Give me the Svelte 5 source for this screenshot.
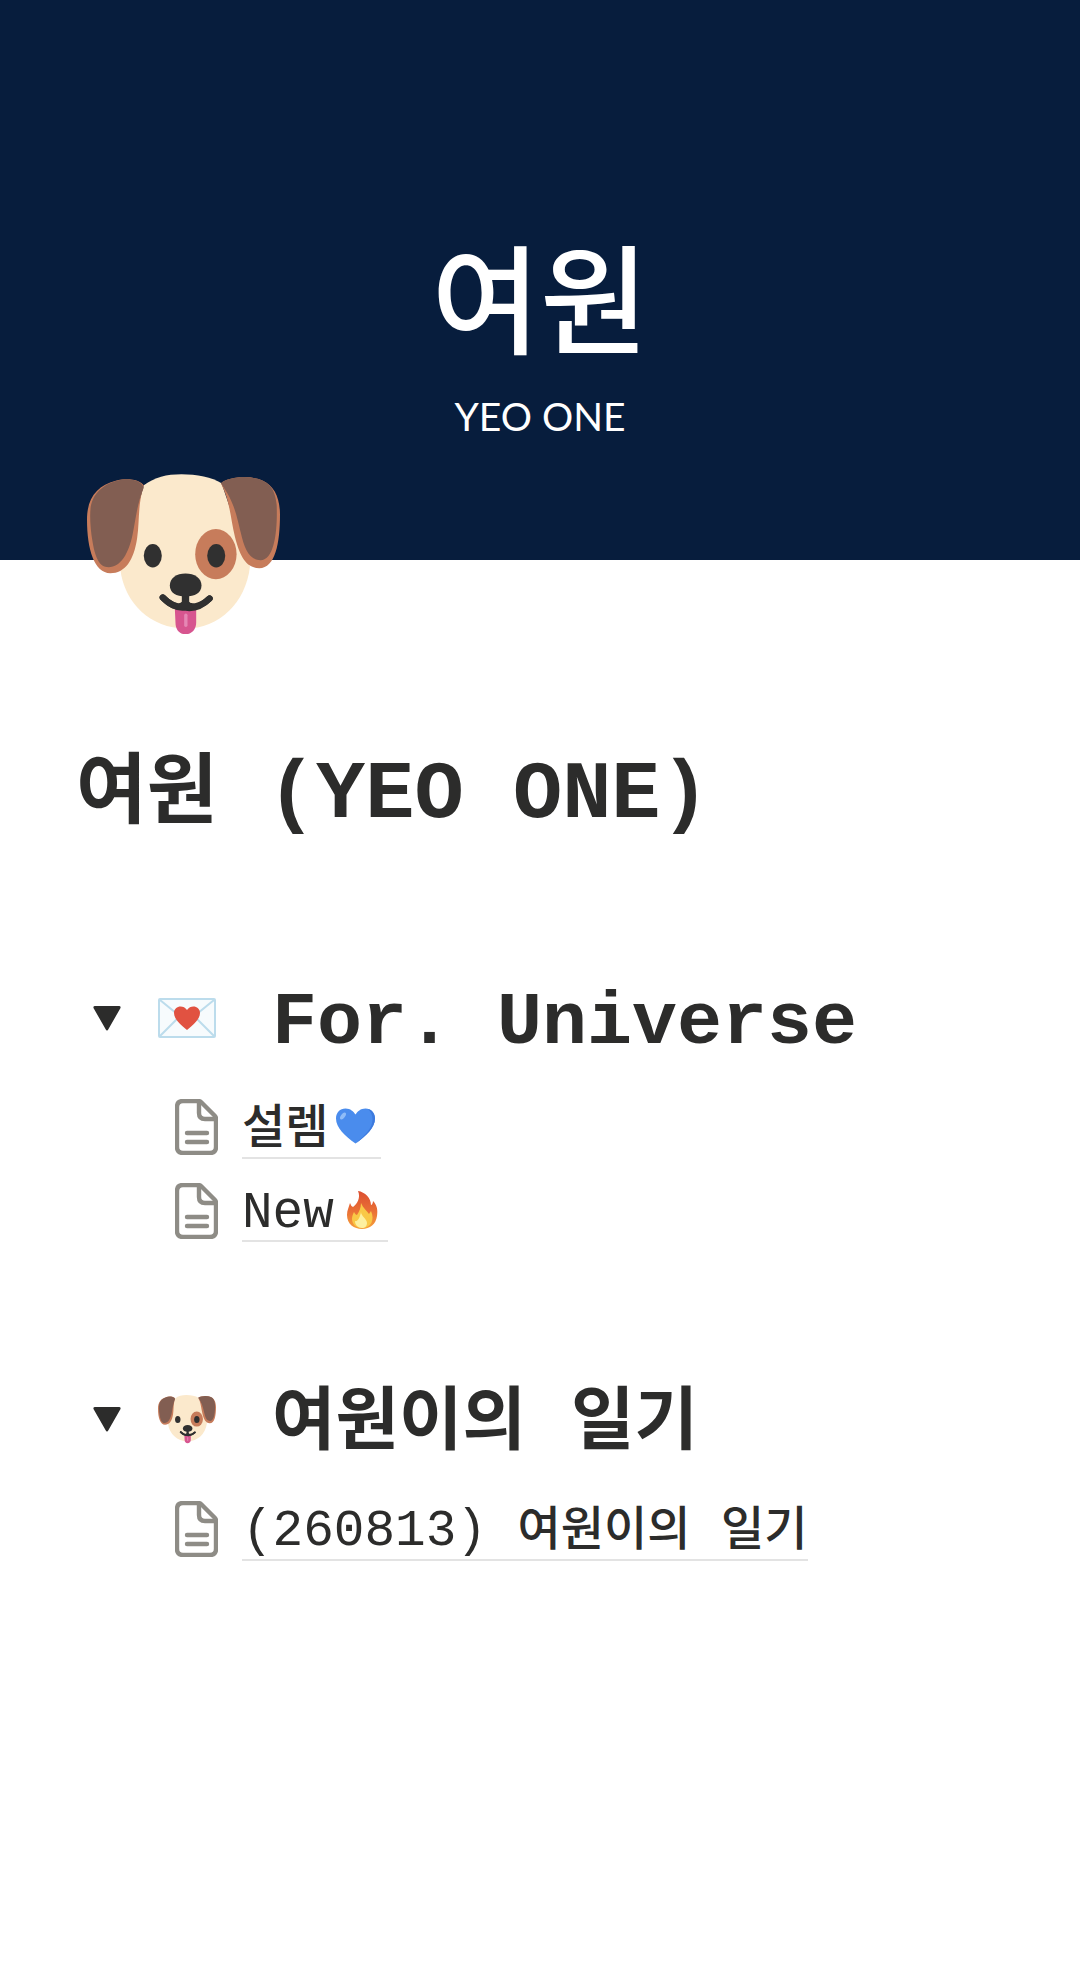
<script lang="ts">
  let sections = $state([
    {
      icon: "letter",
      title: [{ text: "For. Universe", ko: false }],
      open: true,
      pages: [
        { parts: [{ text: "설렘", ko: true }], emoji: "heart" },
        { parts: [{ text: "New", ko: false }], emoji: "fire" },
      ],
    },
    {
      icon: "dog",
      title: [
        { text: "여원이의", ko: true },
        { text: " ", ko: false },
        { text: "일기", ko: true },
      ],
      open: true,
      pages: [
        {
          parts: [
            { text: "(260813) ", ko: false },
            { text: "여원이의", ko: true },
            { text: " ", ko: false },
            { text: "일기", ko: true },
          ],
          emoji: "",
        },
      ],
    },
  ]);
</script>

{#snippet dog()}
  <svg class="dog" viewBox="52 43 578 480" aria-hidden="true">
    <path
      d="M222 77C255 53 290 44 335 44s92 9 120 27l85 249c-12 108-92 186-194 186S164 430 152 330Z"
      fill="#fbe9cc"
    />
    <path
      d="M222 77c-12-18-50-23-84-14C83 78 52 112 52 180c0 88 22 160 70 160 44 0 70-38 80-104 8-52 1-96 20-159Z"
      fill="#c77c5b"
    />
    <path
      d="M222 84c-8-24-46-31-84-20-40 12-66 38-74 72-5 26-2 72 4 106 8 50 20 80 49 80 36 0 60-40 72-100 9-46 15-98 33-138Z"
      fill="#825e52"
    />
    <path
      d="M453 71c24-20 86-26 126-8 33 15 51 50 51 102 0 84-14 160-62 160-42 0-60-42-73-94-13-53-14-106-42-160Z"
      fill="#c77c5b"
    />
    <path
      d="M453 71c24-20 86-26 126-8 26 12 37 34 41 72 3 70-5 166-48 166-34 0-48-32-60-84-16-68-23-94-59-146Z"
      fill="#825e52"
    />
    <ellipse cx="438" cy="283" rx="62" ry="75" fill="#c77c5b" />
    <ellipse cx="249" cy="288" rx="27" ry="35" fill="#303030" />
    <ellipse cx="439" cy="288" rx="27" ry="35" fill="#303030" />
    <path d="M315 446h64v42c0 22-14 35-32 35s-30-13-30-35Z" fill="#d7558f" />
    <path d="M348 466v30" stroke="#e587b4" stroke-width="10" stroke-linecap="round" />
    <path
      d="M279 413c28 30 60 34 68 14 10 22 46 14 72-11"
      fill="none"
      stroke="#303030"
      stroke-width="19"
      stroke-linecap="round"
    />
    <path
      d="M279 413c22 22 44 32 64 30M419 416c-20 20-42 30-66 28"
      fill="none"
      stroke="#303030"
      stroke-width="19"
      stroke-linecap="round"
    />
    <path d="M336 400h22v26l14 20c-10 6-18 4-25-2-8 8-18 8-28 2l17-20Z" fill="#303030" />
    <path
      d="M300 377c0-22 20-36 47-36s48 14 48 36-20 33-48 33-47-11-47-33Z"
      fill="#303030"
    />
  </svg>
{/snippet}

{#snippet emoji(name: string)}
  {#if name === "dog"}
    {@render dog()}
  {:else if name === "letter"}
    <svg class="letter" viewBox="0 0 58 40" aria-hidden="true">
      <rect x="1" y="1" width="56" height="38" rx="1" fill="#f7fbfd" stroke="#bcdcec" stroke-width="2" />
      <path d="M2 2l27 22L56 2M2 38l19-19M56 38L37 19" fill="none" stroke="#bcdcec" stroke-width="2" />
      <path
        d="M29 32C22 26 16 21 16 15c0-7 9-9 13-3 4-6 13-4 13 3 0 6-6 11-13 17Z"
        fill="#e15241"
      />
    </svg>
  {:else if name === "heart"}
    <svg class="heart" viewBox="0 0 39 36" aria-hidden="true">
      <path
        d="M19.500 35.500C9 28 0 20 0 10.500 0 4.500 4 .5 9.500.5c5 0 8 3 10 6 2-3 5-6 10-6 5.500 0 9.500 4 9.500 10 0 9.500-9 17.500-19.500 25Z"
        fill="#4a8ced"
      />
      <path
        d="M32 1c4 1 7 5 7 9.500 0 9.500-9 17.500-19.500 25 9-8 17-15 17-24 0-5-2-8-4.500-10.500Z"
        fill="#3d7add"
      />
      <ellipse cx="7" cy="8" rx="2" ry="4" fill="#8fbcf7" transform="rotate(38 7 8)" />
    </svg>
  {:else if name === "fire"}
    <svg class="fire" viewBox="0 0 32 38" aria-hidden="true">
      <defs>
        <linearGradient id="flame" x1="0" y1="0" x2="0" y2="1">
          <stop offset="0" stop-color="#dc4f31" />
          <stop offset=".55" stop-color="#ea7136" />
          <stop offset="1" stop-color="#f6a13a" />
        </linearGradient>
      </defs>
      <path
        d="M12 0c7 1 13 7 13 14 1 0 2-2 2-4 4 4 5 9 4 15-1 8-7 13-15 13S1 33 1 24c0-5 2-8 3-12 1 2 1 3 3 4C11 13 15 7 12 0Z"
        fill="url(#flame)"
      />
      <path
        d="M15 12c2 5 6 8 8 11l2-3c4 9 0 17-9 17-6 0-10-4-10-9 0-3 1-5 2-7 1 2 2 3 3 3 2-3 4-7 4-12Z"
        fill="#f9c846"
      />
      <path d="M15 21c0 4 6 7 6 11 0 3-2 5-5 5-4 0-7-3-7-7 3 1 5-4 6-9Z" fill="#fdf0a0" />
    </svg>
  {/if}
{/snippet}

<header class="cover">
  <div class="signature">
    <p class="signature-ko" lang="ko">여원</p>
    <p class="signature-en">YEO ONE</p>
  </div>
</header>

<main>
  <div class="page-icon">{@render dog()}</div>
  <h1><span class="ko" lang="ko">여원</span> (YEO ONE)</h1>

  {#each sections as section}
    <section>
      <div class="heading">
        <button
          class="toggle"
          class:closed={!section.open}
          aria-label="Toggle section"
          aria-expanded={section.open}
          onclick={() => (section.open = !section.open)}
        >
          <svg viewBox="0 0 28 25" aria-hidden="true">
            <path d="M2 0h24q2 0 1.500 2L15.500 23q-1.500 3-3 0L.5 2Q0 0 2 0Z" fill="#2c2c2b" />
          </svg>
        </button>
        <span class="section-icon">{@render emoji(section.icon)}</span>
        <h2>{#each section.title as part}<span class:ko={part.ko}>{part.text}</span>{/each}</h2>
      </div>

      {#if section.open}
        <ul>
          {#each section.pages as page}
            <li>
              <svg class="doc" viewBox="0 0 43 56" aria-hidden="true">
                <path
                  d="M8 2h15q2 0 3 1l14 14q1 1 1 3v28q0 6-6 6H8q-6 0-6-6V8q0-6 6-6Z"
                />
                <path d="M24 3v11q0 6 6 6h11M12 34h20M12 43h20" />
              </svg>
              <a href="#page">
                <span class="label">{#each page.parts as part}<span class:ko={part.ko}>{part.text}</span>{/each}</span>
                {@render emoji(page.emoji)}
              </a>
            </li>
          {/each}
        </ul>
      {/if}
    </section>
  {/each}
</main>

<style>
  :global(body) {
    margin: 0;
    background-color: #fff;
    color: #2c2c2b;
    font-family: "Liberation Mono", "Noto Sans CJK KR", monospace;
  }

  svg {
    display: block;
    flex: none;
  }

  .cover {
    box-sizing: border-box;
    display: flex;
    justify-content: center;
    height: 560px;
    padding-top: 210px;
    background-color: #071d3d;
    color: #fff;
  }

  .signature {
    text-align: center;
  }

  .signature p {
    margin: 0;
  }

  .signature-ko {
    font-family: "Noto Sans CJK KR", sans-serif;
    font-size: 118px;
    font-weight: 500;
    line-height: 168px;
  }

  .signature-en {
    font-family: Lato, sans-serif;
    font-size: 39px;
    line-height: 76px;
  }

  main {
    padding: 0 76px 80px;
  }

  .page-icon {
    position: relative;
    width: 193px;
    height: 160px;
    margin: -86px 0 110px 11px;
  }

  .dog {
    width: 100%;
  }

  h1,
  h2 {
    margin: 0;
    font-weight: 700;
    white-space: pre-wrap;
  }

  h1 {
    margin-bottom: 115px;
    font-size: 82px;
    line-height: 104px;
  }

  h1 .ko {
    font-size: 77px;
  }

  section {
    margin-bottom: 112px;
  }

  .heading {
    display: flex;
    align-items: center;
    min-height: 108px;
    margin-bottom: 13px;
    padding-left: 17px;
  }

  .toggle {
    width: 28px;
    padding: 0;
    border: 0;
    background: none;
    cursor: pointer;
  }

  .toggle.closed {
    transform: rotate(-90deg);
  }

  .section-icon {
    width: 58px;
    margin: 0 56px 0 37px;
  }

  h2 {
    padding-top: 12px;
    font-size: 75px;
    line-height: 96px;
  }

  h2 .ko {
    font-size: 69px;
  }

  ul {
    margin: 0;
    padding: 0 0 0 99px;
    list-style: none;
  }

  li {
    display: flex;
    align-items: center;
    gap: 24px;
    min-height: 84px;
  }

  .doc {
    width: 43px;
    fill: none;
    stroke: #8e8c86;
    stroke-width: 4.4;
    stroke-linecap: round;
    stroke-linejoin: round;
  }

  a {
    display: flex;
    align-items: center;
    gap: 8px;
    border-bottom: 2px solid #e3e3e3;
    color: inherit;
    font-size: 51px;
    line-height: 52px;
    text-decoration: none;
  }

  .label {
    padding-top: 8px;
    white-space: pre-wrap;
  }

  a .ko {
    font-size: 47px;
    font-weight: 500;
  }

  .heart {
    width: 39px;
    margin-right: 6px;
  }

  .fire {
    width: 32px;
    margin: 0 10px 0 4px;
  }
</style>
